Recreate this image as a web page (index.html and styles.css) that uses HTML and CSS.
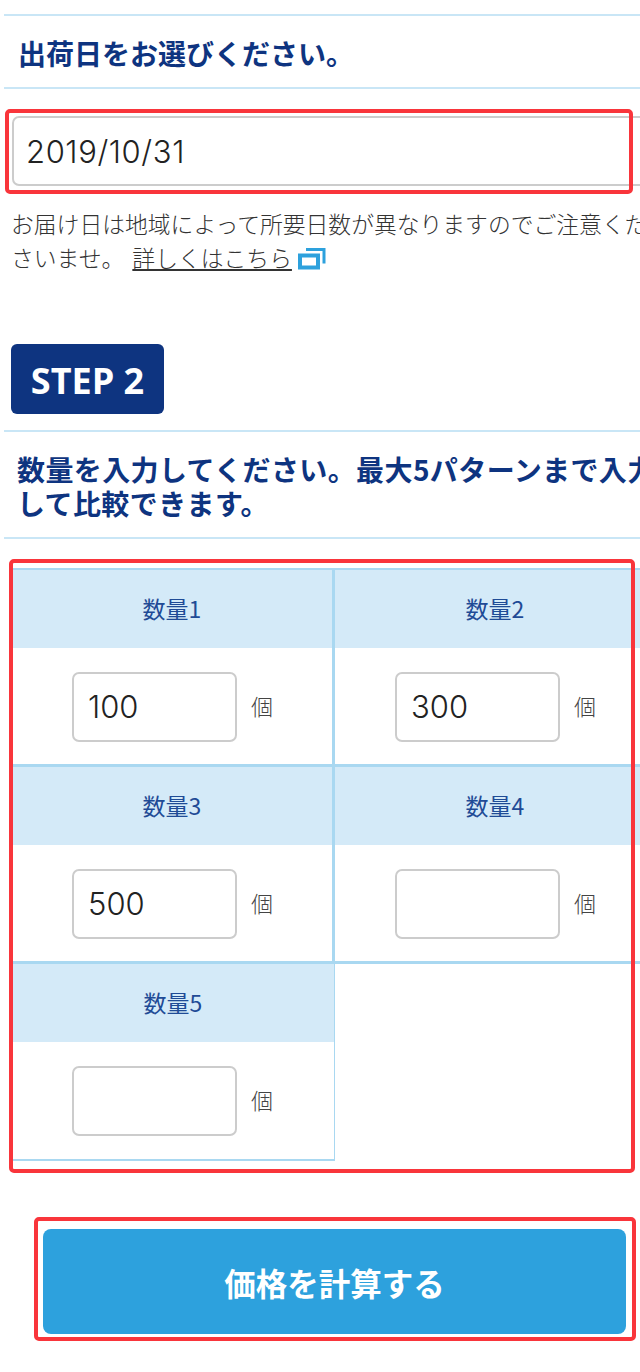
FILE: index.html
```html
<!DOCTYPE html>
<html lang="ja">
<head>
<meta charset="UTF-8">
<title>価格計算</title>
<link rel="stylesheet" href="styles.css">
</head>
<body>
<div class="page">

  <!-- 出荷日 -->
  <h2 class="head head-date">出荷日をお選びください。</h2>
  <div class="date-box marked">
    <input class="field date" value="2019/10/31">
  </div>
  <p class="note">お届け日は地域によって所要日数が異なりますのでご注意くださいませ。 <a href="#">詳しくはこちら</a>
    <svg class="ext" width="30" height="22" viewBox="0 0 30 22"><path d="M9 1.5h18v14" fill="none" stroke="#2da1dd" stroke-width="3"/><rect x="3" y="7.5" width="18" height="12" fill="none" stroke="#2da1dd" stroke-width="4"/></svg>
  </p>

  <!-- STEP 2 -->
  <div class="step">STEP 2</div>
  <h2 class="head head-qty">数量を入力してください。最大5パターンまで入力して比較できます。</h2>

  <div class="qty-wrap marked">
    <div class="qty">
      <div class="cell">
        <div class="cell-head">数量1</div>
        <div class="cell-body"><input class="field num" value="100"><span>個</span></div>
      </div>
      <div class="cell">
        <div class="cell-head">数量2</div>
        <div class="cell-body"><input class="field num" value="300"><span>個</span></div>
      </div>
      <div class="cell">
        <div class="cell-head">数量3</div>
        <div class="cell-body"><input class="field num" value="500"><span>個</span></div>
      </div>
      <div class="cell">
        <div class="cell-head">数量4</div>
        <div class="cell-body"><input class="field num"><span>個</span></div>
      </div>
      <div class="cell last">
        <div class="cell-head">数量5</div>
        <div class="cell-body"><input class="field num"><span>個</span></div>
      </div>
    </div>
  </div>

  <div class="btn-wrap marked">
    <button class="calc">価格を計算する</button>
  </div>

</div>
</body>
</html>
```

FILE: styles.css
```css
:root{--navy:#0e3480;--line:#c9e6f6;--cell:#a9d8f1;--red:#f9353b;--blue:#2da1dd}
*,*::after{box-sizing:border-box}
html,body{margin:0;height:1372px;overflow:hidden;background:#fff}
body{font-family:"Noto Sans CJK JP","Noto Sans",sans-serif;color:#333}
.page{width:680px;padding:14px 0 0 4px}

.head{
  margin:0;color:var(--navy);font-size:28px;font-weight:700;line-height:34px;
  border-top:2px solid var(--line);border-bottom:2px solid var(--line)}
.head-date{height:75px;padding:20px 0 0 14px}
.head-qty{width:660px;height:109px;padding:20px 0 0 13px;margin-top:16px;letter-spacing:.4px;word-break:break-all}

/* red marks */
.marked{position:relative}
.marked::after{
  content:"";position:absolute;border:4px solid var(--red);border-radius:5px;pointer-events:none}

.date-box{margin:27px 0 0 8px;width:668px}
.date-box::after{left:-7px;top:-7px;width:628px;height:85px}
.field{
  display:block;border:2px solid #ccc;border-radius:7px;background:#fff;
  font-family:Inter,sans-serif;font-weight:300;color:#222;outline:none}
.date{width:100%;height:70px;padding:0 12px;font-size:31px;letter-spacing:.6px}

.note{margin:21px 0 0 7px;width:650px;font-size:22.8px;line-height:34px;color:#333;font-weight:300}
.note a{color:#333;margin-left:3px}
.ext{vertical-align:-3px}

.step{
  margin:69px 0 0 7px;width:153px;height:70px;border-radius:6px;background:var(--navy);
  color:#fff;font:700 36px/74px "Open Sans",sans-serif;text-align:center}

.qty-wrap{margin:29px 0 0 8px}
.qty-wrap::after{left:-3px;top:-9px;width:626px;height:614px}
.qty{display:grid;grid-template-columns:323px 323px;width:646px;border-top:2px solid var(--cell)}
.cell{border-right:3px solid var(--cell);border-bottom:3px solid var(--cell);height:197px}
.cell.last{border-right-width:1px;border-bottom-width:2px}
.cell-head{
  height:78px;background:#d4eaf8;color:#1f4b96;font-size:23px;
  line-height:77px;text-align:center}
.cell-body{display:flex;align-items:center;padding:24px 0 0 60px;font-size:22px;color:#444;font-weight:300}
.cell-body span{margin-top:-4px}
.num{width:165px;height:70px;padding:0 14px 2px;font-size:31px;margin-right:14px}

.btn-wrap{margin:68px 0 0 39px;width:583px}
.btn-wrap::after{left:-9px;top:-12px;width:602px;height:124px}
.calc{
  display:block;width:100%;height:105px;border:none;border-radius:8px;
  background:var(--blue);color:#fff;font:700 31.5px/100px "Noto Sans CJK JP",sans-serif}
```
